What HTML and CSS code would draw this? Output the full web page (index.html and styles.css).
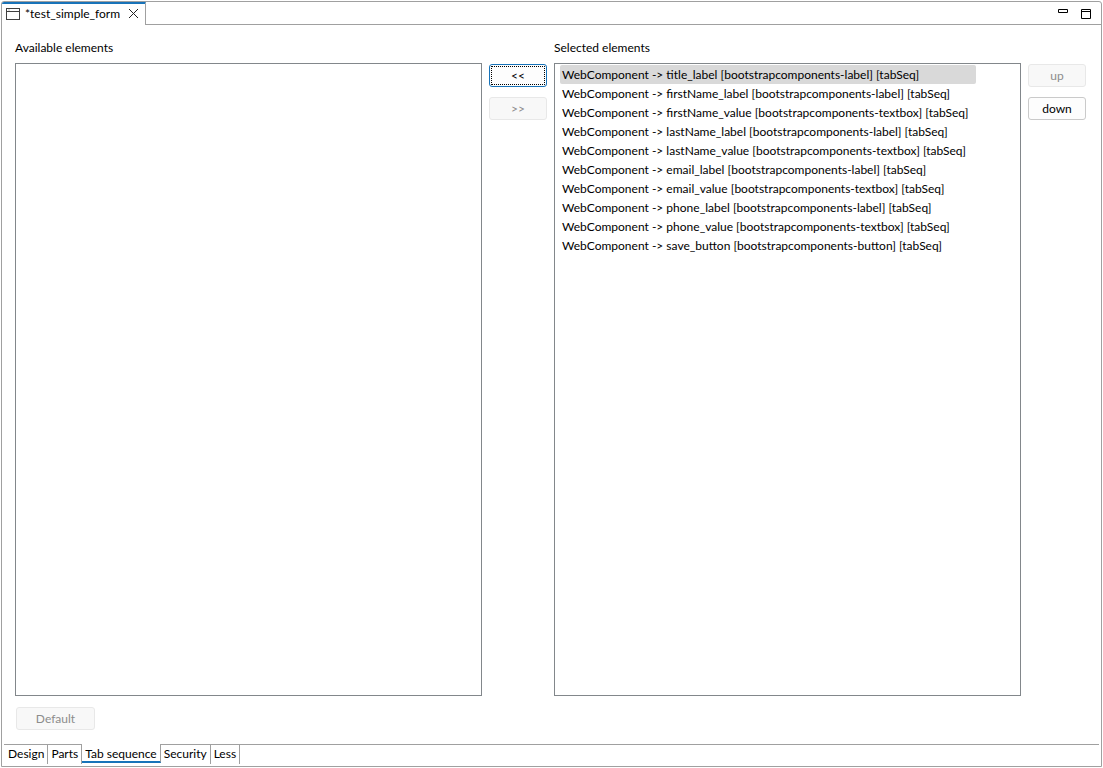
FILE: index.html
```
<!DOCTYPE html>
<html lang="en">
<head>
<meta charset="utf-8">
<title>test_simple_form</title>
<link rel="stylesheet" href="styles.css">
</head>
<body>
<main class="editor">
  <header class="titlebar">
    <div class="file-tab">
      <svg class="form-icon" width="16" height="14" viewBox="0 0 16 14" fill="none" stroke="#404040"><rect x="1.5" y="1.5" width="13" height="11" fill="#fff"/><path d="M1 4.500H15"/><path d="M3 3H5" stroke="#bbb"/></svg>
      <span>*test_simple_form</span>
      <button class="icon-button" type="button" aria-label="Close tab"><svg width="11" height="11" viewBox="0 0 11 11" fill="none" stroke="#222"><path d="M1 1L10 10M10 1L1 10"/></svg></button>
    </div>
    <div class="window-tools">
      <button class="icon-button" type="button" aria-label="Minimize"><svg width="12" height="12" viewBox="0 0 12 12" fill="none" stroke="#000"><path d="M1.500 2.500H10.500V5.500H1.500Z"/></svg></button>
      <button class="icon-button" type="button" aria-label="Maximize"><svg width="12" height="12" viewBox="0 0 12 12" fill="none" stroke="#000"><path d="M1.500 2.500H10.500V11.500H1.500ZM1 4.500H11"/></svg></button>
    </div>
  </header>
  <section class="content">
    <div class="column">
      <h2 class="heading" id="available">Available elements</h2>
      <ul class="list" role="listbox" aria-labelledby="available"></ul>
    </div>
    <div class="actions">
      <button class="button focused" type="button">&lt;&lt;</button>
      <button class="button" type="button" disabled>&gt;&gt;</button>
    </div>
    <div class="column">
      <h2 class="heading" id="selected">Selected elements</h2>
      <ul class="list" role="listbox" aria-labelledby="selected">
        <li class="item current" role="option" aria-selected="true">WebComponent -&gt; title_label [bootstrapcomponents-label] [tabSeq]</li>
        <li class="item" role="option">WebComponent -&gt; firstName_label [bootstrapcomponents-label] [tabSeq]</li>
        <li class="item" role="option">WebComponent -&gt; firstName_value [bootstrapcomponents-textbox] [tabSeq]</li>
        <li class="item" role="option">WebComponent -&gt; lastName_label [bootstrapcomponents-label] [tabSeq]</li>
        <li class="item" role="option">WebComponent -&gt; lastName_value [bootstrapcomponents-textbox] [tabSeq]</li>
        <li class="item" role="option">WebComponent -&gt; email_label [bootstrapcomponents-label] [tabSeq]</li>
        <li class="item" role="option">WebComponent -&gt; email_value [bootstrapcomponents-textbox] [tabSeq]</li>
        <li class="item" role="option">WebComponent -&gt; phone_label [bootstrapcomponents-label] [tabSeq]</li>
        <li class="item" role="option">WebComponent -&gt; phone_value [bootstrapcomponents-textbox] [tabSeq]</li>
        <li class="item" role="option">WebComponent -&gt; save_button [bootstrapcomponents-button] [tabSeq]</li>
      </ul>
    </div>
    <div class="actions">
      <button class="button" type="button" disabled>up</button>
      <button class="button" type="button">down</button>
    </div>
  </section>
  <div class="footer">
    <button class="button default" type="button" disabled>Default</button>
  </div>
  <nav class="pages">
    <a class="page" href="#design">Design</a>
    <a class="page" href="#parts">Parts</a>
    <a class="page active" href="#tab-sequence" aria-current="page">Tab sequence</a>
    <a class="page" href="#security">Security</a>
    <a class="page" href="#less">Less</a>
  </nav>
</main>
</body>
</html>
```
FILE: styles.css
```
* { box-sizing: border-box; }

body {
  margin: 0;
  background: #fff;
  color: #000;
  font: 12px/19px Lato, "Open Sans", sans-serif;
}

button { font: inherit; color: inherit; }

.editor {
  display: flex;
  flex-direction: column;
  min-height: calc(100vh - 2px);
  margin: 1px;
  border: 1px solid #a0a0a0;
  border-radius: 3px 3px 0 0;
}

.titlebar {
  display: flex;
  height: 23px;
}

.file-tab {
  display: flex;
  align-items: center;
  gap: 4px;
  padding: 0 6px 2px 3px;
  border-top: 2px solid #1873b9;
  border-right: 1px solid #a0a0a0;
  border-radius: 2px 0 0 0;
  white-space: nowrap;
}

.file-tab .icon-button { margin-left: 4px; }

.window-tools {
  display: flex;
  flex: 1;
  justify-content: flex-end;
  align-items: center;
  gap: 11px;
  padding-right: 9px;
  border-bottom: 1px solid #a0a0a0;
}

.icon-button {
  display: flex;
  padding: 0;
  border: 0;
  background: none;
}

.content {
  display: grid;
  flex: 1;
  grid-template-columns: 1fr 58px 1fr 58px;
  gap: 7px;
  padding: 13px 15px 0 13px;
}

.column {
  display: flex;
  flex-direction: column;
  min-width: 0;
}

.heading {
  margin: 0 0 6px;
  font-size: 12px;
  font-weight: 400;
}

.list {
  display: grid;
  flex: 1;
  grid-template-columns: max-content;
  align-content: start;
  margin: 0;
  padding: 1px 5px;
  border: 1px solid #82878b;
  list-style: none;
  overflow: hidden;
}

.item {
  padding: 0 8px 0 2px;
  border-radius: 2px;
  white-space: nowrap;
}

.current { background: #d9d9d9; }

.actions {
  display: flex;
  flex-direction: column;
  gap: 10px;
  padding-top: 26px;
}

.button {
  height: 23px;
  padding: 0;
  border: 1px solid #cacaca;
  border-radius: 3px;
  background: #fdfdfd;
  line-height: 19px;
}

.button:disabled {
  border-color: #e8e8e8;
  background: #f8f8f8;
  color: #8c8c8c;
}

.focused {
  border-color: #1873b9;
  outline: 1px dotted #000;
  outline-offset: -3px;
}

.footer { padding: 11px 14px 14px; }

.default { width: 79px; }

.pages {
  display: flex;
  height: 22px;
  margin: 0 2px;
  padding-left: 1px;
  border-top: 1px solid #a0a0a0;
}

.page {
  height: 19px;
  padding: 0 3px;
  border-right: 1px solid #a0a0a0;
  color: inherit;
  line-height: 17px;
  text-decoration: none;
  white-space: nowrap;
}

.active {
  margin-top: -1px;
  padding-top: 1px;
  border-bottom: 2px solid #1873b9;
  background: #fff;
}
```
